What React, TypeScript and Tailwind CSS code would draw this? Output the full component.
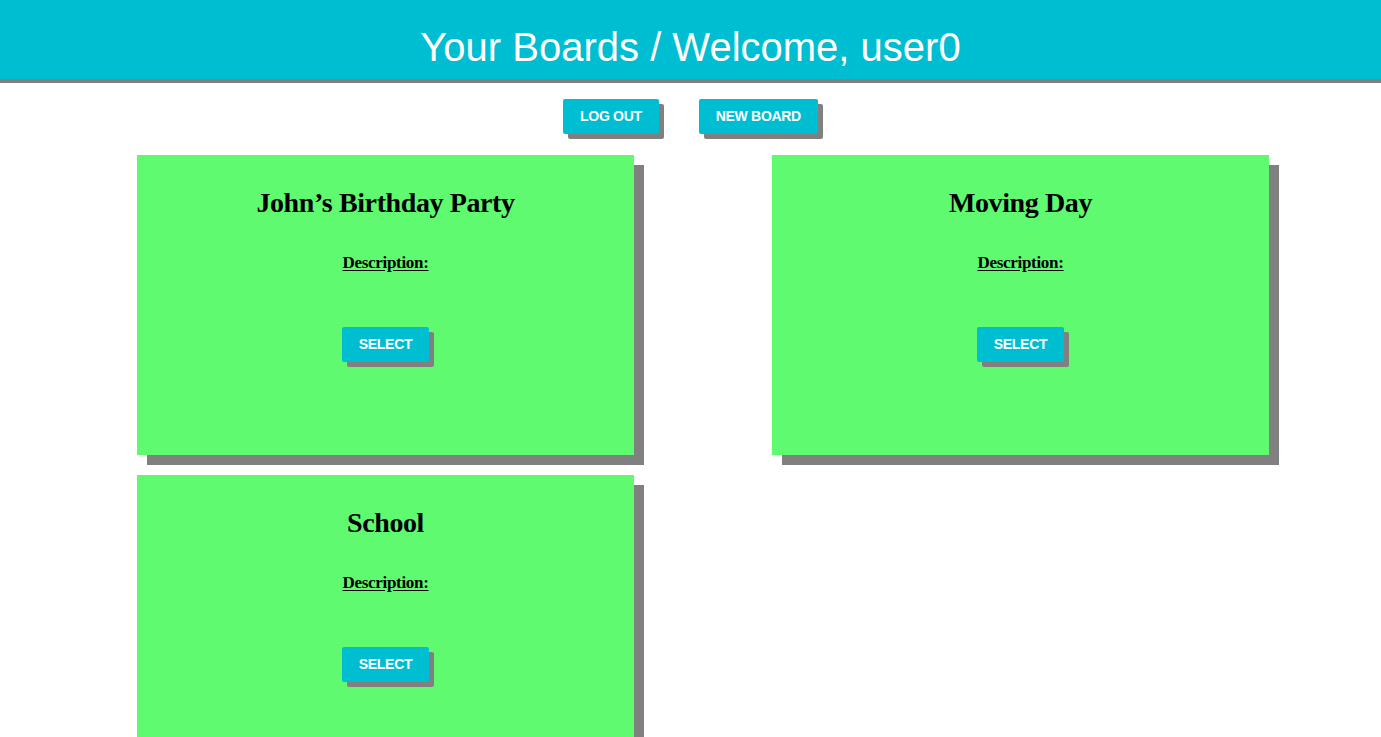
const boards = ["John’s Birthday Party", 'Moving Day', 'School'];

function ShadowButton({ label }: { label: string }) {
  return (
    <button className="h-[35px] px-[17px] rounded-[2px] bg-[#00bed2] text-white text-[14px] font-bold shadow-[5px_5px_0_#808080] font-['Liberation_Sans',Arial,sans-serif] tracking-[-0.3px]">
      {label}
    </button>
  );
}

function BoardCard({ title }: { title: string }) {
  return (
    <div className="w-[497px] h-[300px] bg-[#5ffa6f] shadow-[10px_10px_0_#808080] flex flex-col items-center font-['Liberation_Serif','Times_New_Roman',serif] text-black">
      <h2 className="mt-[31px] text-[28px] leading-[34px] font-bold tracking-[-0.4px]">{title}</h2>
      <p className="mt-[32px] text-[17px] leading-[22px] font-bold underline underline-offset-2 tracking-[-0.3px]">
        Description:
      </p>
      <div className="mt-[53px]">
        <ShadowButton label="SELECT" />
      </div>
    </div>
  );
}

export default function App() {
  return (
    <div className="bg-white overflow-hidden h-[737px]">
      <header className="h-[83px] bg-[#00bed2] border-b-[4px] border-[#808080] flex items-center justify-center pt-[14px]">
        <h1 className="text-white text-[40px] leading-[48px] font-['Liberation_Sans',Arial,sans-serif]">
          Your Boards / Welcome, user0
        </h1>
      </header>
      <div className="flex justify-center gap-[40px] mt-[16px]">
        <ShadowButton label="LOG OUT" />
        <ShadowButton label="NEW BOARD" />
      </div>
      <div className="grid grid-cols-[497px_497px] gap-x-[138px] gap-y-[20px] pl-[137px] mt-[21px]">
        {boards.map((b) => (
          <BoardCard key={b} title={b} />
        ))}
      </div>
    </div>
  );
}
